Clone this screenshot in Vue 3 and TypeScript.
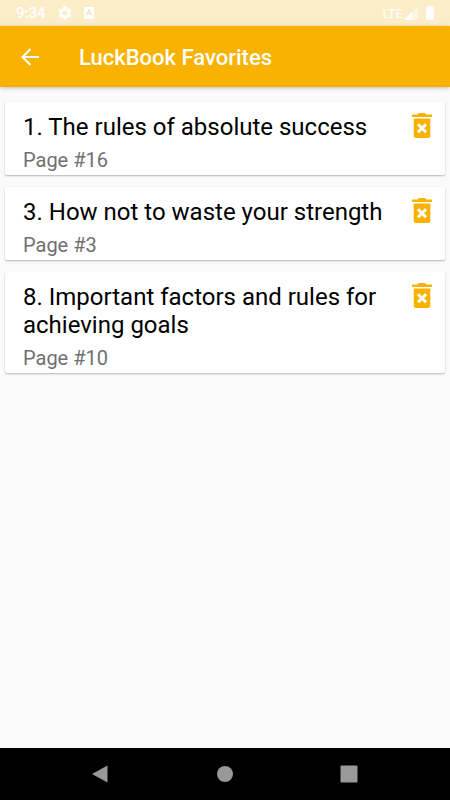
<script setup lang="ts">
import { ref } from 'vue'

interface Favorite {
  id: number
  title: string
  page: number
}

const favorites = ref<Favorite[]>([
  { id: 1, title: 'The rules of absolute success', page: 16 },
  { id: 3, title: 'How not to waste your strength', page: 3 },
  { id: 8, title: 'Important factors and rules for achieving goals', page: 10 },
])

function remove(id: number): void {
  favorites.value = favorites.value.filter((item) => item.id !== id)
}
</script>

<template>
  <div class="screen">
    <div class="status-bar">
      <span class="clock">9:34</span>
      <svg class="gear" viewBox="2 2 20 20" aria-hidden="true">
        <path
          d="M19.14 12.94c.04-.3.06-.61.06-.94 0-.32-.02-.64-.07-.94l2.03-1.58c.18-.14.23-.41.12-.61l-1.92-3.32c-.12-.22-.37-.29-.59-.22l-2.39.96c-.5-.38-1.03-.7-1.62-.94l-.36-2.54c-.04-.24-.24-.41-.48-.41h-3.84c-.24 0-.43.17-.47.41l-.36 2.54c-.59.24-1.13.57-1.62.94l-2.39-.96c-.22-.08-.47 0-.59.22L2.74 8.87c-.12.21-.08.47.12.61l2.03 1.58c-.05.3-.09.63-.09.94s.02.64.07.94l-2.03 1.58c-.18.14-.23.41-.12.61l1.92 3.32c.12.22.37.29.59.22l2.39-.96c.5.38 1.03.7 1.62.94l.36 2.54c.05.24.24.41.48.41h3.84c.24 0 .44-.17.47-.41l.36-2.54c.59-.24 1.13-.56 1.62-.94l2.39.96c.22.08.47 0 .59-.22l1.92-3.32c.12-.22.07-.47-.12-.61l-2.01-1.58zM12 15.6c-1.98 0-3.6-1.62-3.6-3.6s1.62-3.6 3.6-3.6 3.6 1.62 3.6 3.6-1.62 3.6-3.6 3.6z"
        />
      </svg>
      <svg class="keyboard" viewBox="0 0 10 12" aria-hidden="true">
        <rect width="10" height="12" rx="1" />
        <path class="keyboard-mark" d="M2.500 8.500 5 2.500 7.500 8.500M3.500 6.500h3" />
      </svg>
      <span class="network">LTE</span>
      <svg class="signal" viewBox="0 0 14 14" aria-hidden="true">
        <path class="signal-off" d="M14 0v14H0z" />
        <path d="M8 6v8H0z" />
      </svg>
      <svg class="battery" viewBox="0 0 8 14" aria-hidden="true">
        <path d="M2 0h4v1h1a1 1 0 0 1 1 1v12H0V2a1 1 0 0 1 1-1h1z" />
      </svg>
    </div>

    <header class="app-bar">
      <button class="back" type="button" aria-label="Back">
        <svg viewBox="0 0 18 18" aria-hidden="true">
          <path d="M18 9H1.500M9.500 1 1.500 9l8 8" />
        </svg>
      </button>
      <h1>LuckBook Favorites</h1>
    </header>

    <main class="list">
      <article v-for="item in favorites" :key="item.id" class="card">
        <div class="text">
          <h2>{{ item.id }}. {{ item.title }}</h2>
          <p>Page #{{ item.page }}</p>
        </div>
        <button class="remove" type="button" aria-label="Delete" @click="remove(item.id)">
          <svg viewBox="0 0 20 25" aria-hidden="true">
            <path d="M0 1.600h5.500L7 0h6l1.500 1.600H20V4H0z" />
            <path d="M1.700 5.500h16.600v17a2.500 2.500 0 0 1-2.500 2.500H4.200a2.500 2.500 0 0 1-2.500-2.500z" />
            <path class="cross" d="m6 11.200 8 8m0-8-8 8" />
          </svg>
        </button>
      </article>
    </main>

    <nav class="nav-bar">
      <button type="button" aria-label="Back">
        <svg viewBox="0 0 18 18" aria-hidden="true"><path d="M0 9 15.500 0.500v17z" /></svg>
      </button>
      <button type="button" aria-label="Home">
        <svg viewBox="0 0 18 18" aria-hidden="true"><circle cx="9" cy="9" r="8" /></svg>
      </button>
      <button type="button" aria-label="Recent apps">
        <svg viewBox="0 0 18 18" aria-hidden="true">
          <rect x="0.500" y="0.500" width="17" height="17" rx="1" />
        </svg>
      </button>
    </nav>
  </div>
</template>

<style>
body {
  background: #fafafa;
}
</style>

<style scoped>
.screen {
  display: flex;
  flex-direction: column;
  min-height: 100vh;
  font-family: Roboto, 'Liberation Sans', sans-serif;
}

button {
  display: flex;
  align-items: center;
  justify-content: center;
  margin: 0;
  padding: 0;
  border: 0;
  background: none;
  cursor: pointer;
}

.status-bar {
  display: flex;
  align-items: center;
  height: 26px;
  padding: 0 16px;
  background: #fbedc8;
  color: #fff;
}

.status-bar svg {
  fill: #fff;
}

.clock {
  font-size: 15px;
  font-weight: 500;
}

.gear {
  width: 14px;
  height: 14px;
  margin-left: 12px;
}

.keyboard {
  width: 10px;
  height: 12px;
  margin-left: 12px;
}

.status-bar .keyboard-mark {
  fill: none;
  stroke: #f3dfae;
  stroke-width: 1;
}

.network {
  margin-left: auto;
  font-size: 13px;
}

.signal {
  width: 14px;
  height: 14px;
  margin-left: 1px;
}

.status-bar .signal-off {
  fill: #fdf6e3;
}

.battery {
  width: 8px;
  height: 14px;
  margin-left: 8px;
}

.app-bar {
  display: flex;
  align-items: center;
  height: 61px;
  padding: 0 21px;
  background: #f9b200;
  box-shadow: 0 1px 4px rgba(0, 0, 0, 0.25);
  color: #fff;
  z-index: 1;
}

.back svg {
  width: 18px;
  height: 18px;
  fill: none;
  stroke: #fff;
  stroke-width: 2;
}

h1 {
  margin: 2px 0 0 40px;
  font-size: 22px;
  font-weight: 500;
}

.list {
  display: flex;
  flex: 1;
  flex-direction: column;
  gap: 12px;
  padding: 15px 5px;
  background: #fafafa;
}

.card {
  display: flex;
  align-items: flex-start;
  gap: 16px;
  padding: 11px 13px 3px 18px;
  border-radius: 2px;
  background: #fff;
  box-shadow: 0 1px 2px rgba(0, 0, 0, 0.28);
}

.text {
  flex: 1;
}

h2 {
  margin: 0;
  color: #000;
  font-size: 24px;
  font-weight: 400;
  line-height: 28px;
}

p {
  margin: 7px 0 0;
  color: #707070;
  font-size: 20px;
  line-height: 24px;
}

.remove svg {
  width: 20px;
  height: 25px;
  fill: #f9b200;
}

.remove .cross {
  stroke: #fff;
  stroke-width: 3;
}

.nav-bar {
  display: flex;
  align-items: center;
  justify-content: space-between;
  height: 52px;
  padding: 0 92px;
  background: #000;
}

.nav-bar svg {
  width: 18px;
  height: 18px;
  fill: #999;
}
</style>
